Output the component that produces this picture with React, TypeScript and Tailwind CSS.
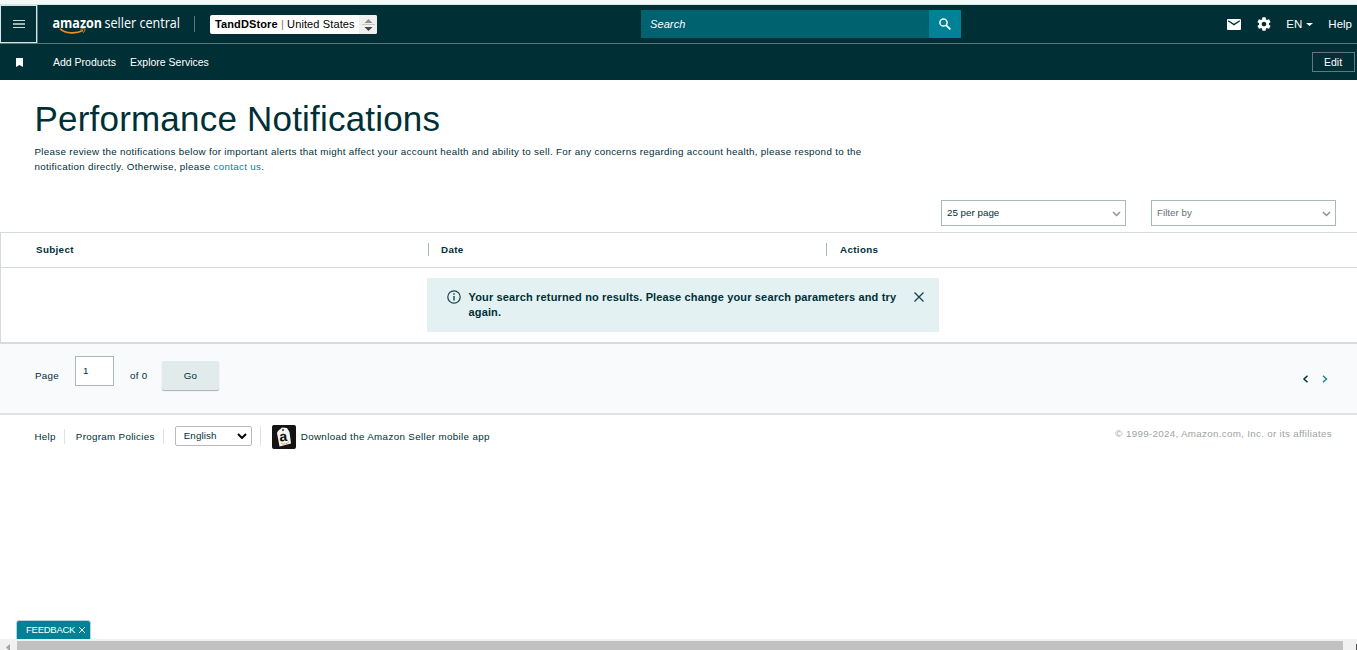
import type { ReactNode } from "react";

const columns = [
  { label: "Subject", className: "w-[427px] pl-[35px]" },
  { label: "Date", className: "w-[398px] border-l border-[#a9b8b8] pl-3" },
  { label: "Actions", className: "border-l border-[#a9b8b8] pl-[13px]" },
];

function SelectBox({ children, className }: { children: ReactNode; className: string }) {
  return (
    <div className={`flex h-[26px] w-[185px] items-center justify-between border border-[#a9b8b9] pr-1 pl-[5px] text-[9.8px] ${className}`}>
      <span className="mt-px">{children}</span>
      <svg className="mt-0.5 h-[6px] w-[9px]" viewBox="0 0 9 6" fill="none" stroke="#879596" strokeWidth="1.5">
        <path d="M1 1l3.5 3.5L8 1" />
      </svg>
    </div>
  );
}

function Logo() {
  return (
    <svg className="h-6 w-[130px] overflow-visible" viewBox="0 0 130 24" fontFamily="'Open Sans', sans-serif">
      <text x="0.5" y="13.5" fontSize="14.5" fontWeight="700" fill="#fff" textLength="49.5" lengthAdjust="spacingAndGlyphs">
        amazon
      </text>
      <text x="52.5" y="13.5" fontSize="15" fill="#fff" textLength="75.5" lengthAdjust="spacingAndGlyphs">
        seller central
      </text>
      <path d="M8 14.8C14 19.8 24 20 31 16.500" fill="none" stroke="#f08c1c" strokeWidth="1.6" />
      <path d="M28.500 15.300c2-.8 4-.8 4.400-.3.4.6-.3 2.300-1.600 3.700" fill="none" stroke="#f08c1c" strokeWidth="1" />
    </svg>
  );
}

function Header() {
  return (
    <header className="bg-[#002f36] text-white">
      <div className="flex h-[39px] items-center border-b border-[#5c777c]">
        <button className="flex h-[38px] w-[37px] items-center justify-center border border-[#d9e6e4]">
          <svg className="h-2 w-3" viewBox="0 0 12 8">
            <path d="M0 0h12v1H0zM0 7h12v1H0z" fill="#cfdcdc" />
            <path d="M0 3h12v2H0z" fill="#9fb3b5" />
          </svg>
        </button>
        <div className="h-full w-px bg-[#5c777c]" />
        <div className="ml-[14px] mt-1">
          <Logo />
        </div>
        <div className="ml-3 h-4 w-px bg-[#5c777c]" />
        <div className="ml-[15px] flex h-[19px] w-[167px] justify-between overflow-hidden rounded-[2px] bg-white text-black">
          <span className="pl-[5px] text-[11px] leading-[19px] tracking-[0.12px] whitespace-nowrap">
            <b>TandDStore</b> <span className="text-[#a06a45]">|</span> United States
          </span>
          <span className="flex w-[18px] shrink-0 items-center justify-center bg-[#efefef]">
            <svg className="mt-px h-3 w-[13px]" viewBox="0 0 13 12">
              <path d="M6.500 0L10.500 4h-8z" fill="#909090" />
              <path d="M0 5.500h13" stroke="#c4c4c4" />
              <path d="M6.500 12L10.500 8h-8z" fill="#444" />
            </svg>
          </span>
        </div>
        <div className="ml-[264px] flex h-7 w-[320px] text-[11px]">
          <div className="flex-1 bg-[#00616f] pl-[9px] leading-7 tracking-[0.1px] italic">Search</div>
          <div className="flex w-8 items-center justify-center bg-[#008296]">
            <svg className="h-3 w-3" viewBox="0 0 12 12" fill="none" stroke="#fff">
              <circle cx="4.500" cy="4.500" r="3.600" strokeWidth="1.500" />
              <path d="M7.300 7.300l4 4" strokeWidth="1.800" />
            </svg>
          </div>
        </div>
        <div className="ml-auto flex items-center pr-[5px] text-[11.5px]">
          <svg className="h-[11px] w-[14px]" viewBox="0 0 14 11">
            <rect width="14" height="11" rx="1" fill="#fff" />
            <path d="M1.200 1.800L7 5.600l5.800-3.800" fill="none" stroke="#002f36" strokeWidth="1.300" />
          </svg>
          <svg className="ml-[15px] h-4 w-4" viewBox="0 0 24 24" fill="#fff">
            <path d="M19.430 12.980c.04-.32.07-.64.07-.98s-.03-.66-.07-.98l2.110-1.650c.19-.15.24-.42.12-.64l-2-3.460c-.12-.22-.39-.3-.61-.22l-2.490 1c-.52-.4-1.080-.73-1.690-.98l-.38-2.650C14.460 2.180 14.250 2 14 2h-4c-.25 0-.46.18-.49.42l-.38 2.650c-.61.25-1.170.59-1.690.98l-2.490-1c-.23-.09-.49 0-.61.22l-2 3.460c-.13.22-.07.49.12.64l2.110 1.650c-.04.32-.07.65-.07.98s.03.66.07.98l-2.110 1.650c-.19.15-.24.42-.12.64l2 3.460c.12.22.39.3.61.22l2.490-1c.52.4 1.080.73 1.690.98l.38 2.650c.03.24.24.42.49.42h4c.25 0 .46-.18.49-.42l.38-2.650c.61-.25 1.170-.59 1.690-.98l2.490 1c.23.09.49 0 .61-.22l2-3.460c.12-.22.07-.49-.12-.64l-2.110-1.650zM12 15.500c-1.930 0-3.500-1.570-3.500-3.500s1.570-3.500 3.500-3.500 3.500 1.570 3.500 3.500-1.570 3.500-3.500 3.500z" />
          </svg>
          <span className="mt-px ml-[14px]">EN</span>
          <svg className="ml-1 h-[3px] w-[7px]" viewBox="0 0 7 3" fill="#fff">
            <path d="M0 0h7L3.500 3z" />
          </svg>
          <span className="mt-px ml-[15px]">Help</span>
        </div>
      </div>
      <nav className="flex h-9 items-center pr-[2px] text-[10.5px]">
        <svg className="ml-4 h-[9px] w-[7px]" viewBox="0 0 7 9" fill="#fff">
          <path d="M0 0h7v9L3.500 7 0 9z" />
        </svg>
        <span className="mt-px ml-[30px]">Add Products</span>
        <span className="mt-px ml-[14px]">Explore Services</span>
        <button className="ml-auto h-5 w-[43px] border border-[#65777b] pr-px leading-none">Edit</button>
      </nav>
    </header>
  );
}

function Alert() {
  return (
    <div className="ml-[426px] flex h-[54px] w-[512px] bg-[#e3f1f2] pt-3 pl-5 text-[11px] leading-[15px] font-bold">
      <svg className="h-[14px] w-[14px]" viewBox="0 0 14 14" fill="none" stroke="#17434c">
        <circle cx="7" cy="7" r="6.200" strokeWidth="1.200" />
        <path d="M7 6v4.500M7 3.300v1.500" strokeWidth="1.400" />
      </svg>
      <p className="ml-[7.5px] w-[439px] tracking-[0.15px]">
        Your search returned no results. Please change your search parameters and try again.
      </p>
      <svg className="mt-[2px] ml-[6px] h-[10px] w-[10px]" viewBox="0 0 10 10" stroke="#17434c" strokeWidth="1.300">
        <path d="M.5.5l9 9M9.500.5l-9 9" />
      </svg>
    </div>
  );
}

function Pagination() {
  return (
    <div className="flex h-[71px] border-b-2 border-[#e0e3e4] bg-[#f8fafc] text-[9.8px] tracking-[0.3px]">
      <span className="mt-[25px] ml-[35px] w-10 leading-[14px]">Page</span>
      <div className="mt-3 h-[30px] w-[39px] border border-[#a9b8b9] bg-white pl-[7px] leading-7">1</div>
      <span className="mt-[25px] ml-4 w-8 leading-[14px]">of 0</span>
      <button className="mt-[17px] h-[29px] w-[57px] rounded-[2px] bg-[#e2ebeb] pt-px shadow-[0_1px_1px_rgba(0,0,0,0.3)]">Go</button>
      <svg className="mt-[31px] mr-[29px] ml-auto h-2 w-[26px]" viewBox="0 0 26 8" fill="none" strokeWidth="1.500">
        <path d="M5.500 .7L2 4l3.500 3.300" stroke="#002f36" />
        <path d="M21 .7L24.500 4 21 7.300" stroke="#2d7f93" />
      </svg>
    </div>
  );
}

function AppIcon() {
  return (
    <svg className="h-6 w-6" viewBox="0 0 24 24">
      <rect width="24" height="24" rx="2" fill="#141414" />
      <path d="M6 6l4-3.500 5 .5 2.500 4L19 18.500 7.500 21.500 5 8z" fill="#f4f4f4" />
      <circle cx="11" cy="5" r="1" fill="#333" />
      <text x="7.500" y="16" fontSize="14" fontWeight="700" fontFamily="'Liberation Sans', sans-serif" fill="#111" transform="rotate(-5 12 12)">
        a
      </text>
      <path d="M9 18.500c3 1 6 .4 8-1.800" fill="none" stroke="#f3a847" />
    </svg>
  );
}

function Footer() {
  return (
    <footer className="flex pt-[9px] pr-[25px] text-[9.8px] tracking-[0.3px]">
      <div className="flex h-6 items-center pl-[34.5px]">
        <span className="mt-0.5">Help</span>
        <span className="ml-2 h-[15px] w-px bg-[#dfe3e3]" />
        <span className="mt-0.5 ml-[11px]">Program Policies</span>
        <span className="ml-2 h-[15px] w-px bg-[#dfe3e3]" />
        <div className="ml-[11px] flex h-5 w-[77px] items-center justify-between rounded-[2px] border border-[#b9bcbc] pr-1 pl-2 tracking-[0.1px]">
          <span className="mt-px">English</span>
          <svg className="h-[6px] w-[10px]" viewBox="0 0 10 6" fill="none" stroke="#000" strokeWidth="2">
            <path d="M1 1l4 4 4-4" />
          </svg>
        </div>
        <span className="ml-2 h-5 w-px bg-[#dfe3e3]" />
        <span className="mt-0.5 ml-[11px]">
          <AppIcon />
        </span>
        <span className="mt-0.5 ml-[5px] tracking-[0.34px]">Download the Amazon Seller mobile app</span>
      </div>
      <span className="mt-[3px] ml-auto leading-[14px] text-[#a0a3a3]">© 1999-2024, Amazon.com, Inc. or its affiliates</span>
    </footer>
  );
}

export default function App() {
  return (
    <div className="flex h-[650px] w-[1357px] flex-col overflow-hidden bg-white font-['Liberation_Sans',Arial,sans-serif] text-[#002f36]">
      <div className="h-[5px] border-b border-[#d8e6e2] bg-[#f4faf8]" />
      <Header />
      <main>
        <h1 className="mt-[17px] ml-[34.5px] text-[35px] leading-[44px] tracking-[0.2px]">Performance Notifications</h1>
        <p className="mt-[3px] ml-[34.5px] text-[9.8px] leading-[15px] tracking-[0.305px] whitespace-nowrap">
          Please review the notifications below for important alerts that might affect your account health and ability to sell. For any concerns regarding account health, please respond to the
          <br />
          notification directly. Otherwise, please <a className="text-[#20788c]">contact us</a>.
        </p>
        <div className="mt-[26px] flex justify-end gap-[25px] pr-[21px]">
          <SelectBox className="text-[#002f36]">25 per page</SelectBox>
          <SelectBox className="text-[#5f7478]">Filter by</SelectBox>
        </div>
        <section className="mt-[6px] h-[112px] border-t border-b-2 border-l border-[#d5dbdb]">
          <div className="flex h-[35px] items-center border-b border-[#d5dbdb] pb-px text-[9.8px] font-bold tracking-[0.35px]">
            {columns.map((column) => (
              <div key={column.label} className={`h-[13px] leading-[13px] ${column.className}`}>
                {column.label}
              </div>
            ))}
          </div>
          <div className="pt-[10px]">
            <Alert />
          </div>
        </section>
        <Pagination />
      </main>
      <Footer />
      <div className="mt-auto ml-4 flex h-[19px] w-[75px] items-center rounded-t-[3px] border border-b-0 border-[#b9d5d6] bg-[#008296] pl-[9px] text-[9.5px] tracking-[-0.25px] text-white">
        FEEDBACK
        <svg className="ml-1 h-[6px] w-[6px] shrink-0" viewBox="0 0 6 6" stroke="#fff">
          <path d="M0 0l6 6M6 0L0 6" />
        </svg>
      </div>
      <div className="flex h-[11px] bg-[#f1f1f1] pt-[2px]">
        <svg className="mt-[3px] ml-[6px] h-[7px] w-1" viewBox="0 0 4 7" fill="#a3a3a3">
          <path d="M4 0v7L0 3.500z" />
        </svg>
        <div className="ml-[7px] w-[1326px] bg-[#c1c1c1]" />
        <div className="mt-[3px] ml-auto w-px bg-[#505050]" />
      </div>
    </div>
  );
}
